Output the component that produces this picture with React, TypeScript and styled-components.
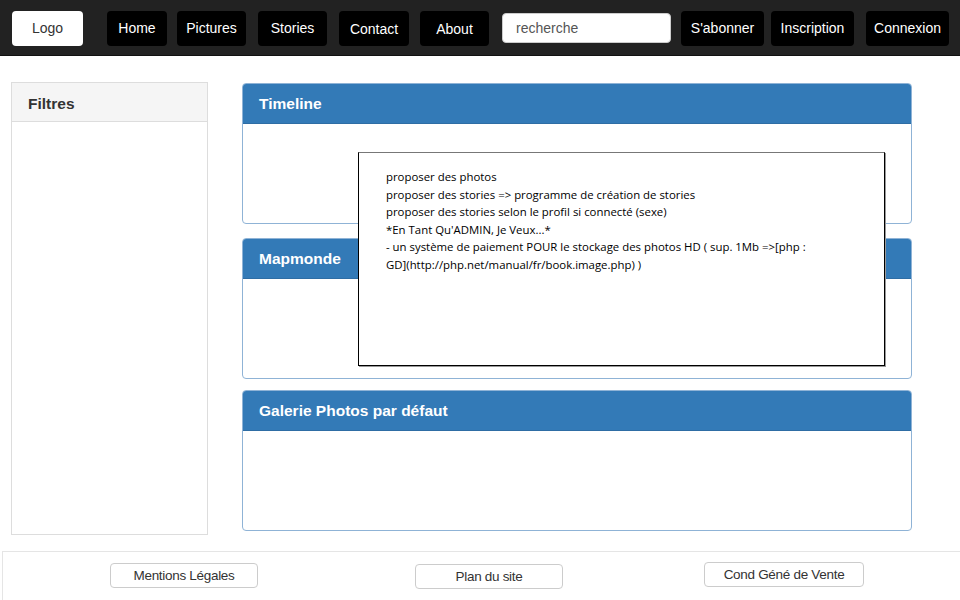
import React from "react";
import styled, { createGlobalStyle } from "styled-components";

const Global = createGlobalStyle`
  html, body { margin: 0; padding: 0; background: #fff; }
  body { font-family: "Liberation Sans", Arial, sans-serif; width: 960px; height: 600px; overflow: hidden; }
  * { box-sizing: border-box; }
`;

const Page = styled.div`
  position: relative;
  width: 960px;
  height: 600px;
  display: flex;
  flex-direction: column;
`;

const TopBar = styled.header`
  height: 56px;
  background: #222;
  display: flex;
  align-items: center;
  padding-left: 12px;
  border-bottom: 1px solid #111;
`;

const LogoButton = styled.div`
  width: 71px;
  height: 35px;
  background: #fff;
  border-radius: 4px;
  display: flex;
  align-items: center;
  justify-content: center;
  font-size: 14px;
  color: #333;
  margin-right: 24px;
  margin-top: 1px;
`;

const NavButton = styled.div<{ $w: number; $ml?: number; $dy?: number }>`
  width: ${(p) => p.$w}px;
  height: 35px;
  margin-left: ${(p) => p.$ml ?? 0}px;
  margin-top: ${(p) => (p.$dy ?? 0) * 2 + 1}px;
  background: #000;
  border-radius: 4px;
  color: #fff;
  font-size: 14px;
  display: flex;
  align-items: center;
  justify-content: center;
`;

const Search = styled.div`
  width: 169px;
  height: 30px;
  margin-left: 13px;
  margin-top: 1px;
  background: #fff;
  border: 1px solid #ccc;
  border-radius: 4px;
  display: flex;
  align-items: center;
  padding-left: 13px;
  font-size: 14px;
  color: #555;
`;

const Body = styled.main`
  flex: 1;
  display: flex;
  padding: 26px 0 0 11px;
  gap: 34px;
`;

const Sidebar = styled.aside`
  width: 197px;
  height: 453px;
  border: 1px solid #ddd;
  display: flex;
  flex-direction: column;
`;

const SideHeader = styled.div`
  height: 39px;
  background: #f5f5f5;
  border-bottom: 1px solid #ddd;
  display: flex;
  align-items: center;
  padding: 3px 0 0 16px;
  font-size: 15.5px;
  font-weight: bold;
  color: #333;
`;

const MainCol = styled.div`
  width: 670px;
  display: flex;
  flex-direction: column;
  padding-top: 1px;
`;

const Panel = styled.section<{ $h: number; $mb: number }>`
  height: ${(p) => p.$h}px;
  margin-bottom: ${(p) => p.$mb}px;
  border: 1px solid #8fb3d6;
  border-radius: 4px;
  overflow: hidden;
`;

const PanelHeader = styled.div`
  height: 40px;
  background: #337ab7;
  border-bottom: 1px solid #2e6da4;
  display: flex;
  align-items: center;
  padding: 1px 0 0 16px;
  color: #fff;
  font-size: 15.5px;
  font-weight: bold;
`;

const Note = styled.div`
  position: absolute;
  left: 358px;
  top: 152px;
  width: 527px;
  height: 214px;
  background: #fff;
  border: 1px solid #000;
  border-top-color: #777;
  box-shadow: 1px 1px 0 #999;
  padding: 15px 0 0 27px;
  font-family: "Open Sans", "DejaVu Sans", sans-serif;
  font-size: 11.4px;
  line-height: 17.6px;
  color: #000;
`;

const NoteLine = styled.div`
  white-space: nowrap;
`;

const Footer = styled.footer`
  height: 49px;
  margin-left: 2px;
  border-top: 1px solid #e5e5e5;
  border-left: 1px solid #e5e5e5;
  display: flex;
  align-items: flex-start;
  padding: 10px 0 0 107px;
`;

const FooterButton = styled.div<{ $w: number; $ml?: number; $dy?: number }>`
  width: ${(p) => p.$w}px;
  height: 25px;
  margin-left: ${(p) => p.$ml ?? 0}px;
  margin-top: ${(p) => p.$dy ?? 0}px;
  border: 1px solid #ccc;
  border-radius: 4px;
  background: #fff;
  display: flex;
  align-items: center;
  justify-content: center;
  font-size: 13.5px;
  color: #333;
  letter-spacing: -0.3px;
`;

const navItems = [
  { label: "Home", w: 60, ml: 0 },
  { label: "Pictures", w: 69, ml: 10 },
  { label: "Stories", w: 69, ml: 12 },
  { label: "Contact", w: 70, ml: 12, dy: 0.5 },
  { label: "About", w: 69, ml: 11, dy: 0.5 },
];

const rightItems = [
  { label: "S'abonner", w: 83, ml: 10 },
  { label: "Inscription", w: 83, ml: 7 },
  { label: "Connexion", w: 83, ml: 12 },
];

const noteLines = [
  "proposer des photos",
  "proposer des stories => programme de création de stories",
  "proposer des stories selon le profil si connecté (sexe)",
  "*En Tant Qu'ADMIN, Je Veux...*",
  "- un système de paiement POUR le stockage des photos HD ( sup. 1Mb =>[php :",
  "GD](http://php.net/manual/fr/book.image.php) )",
];

export default function App() {
  return (
    <Page>
      <Global />
      <TopBar>
        <LogoButton>Logo</LogoButton>
        {navItems.map((n) => (
          <NavButton key={n.label} $w={n.w} $ml={n.ml} $dy={n.dy}>
            {n.label}
          </NavButton>
        ))}
        <Search>recherche</Search>
        {rightItems.map((n) => (
          <NavButton key={n.label} $w={n.w} $ml={n.ml}>
            {n.label}
          </NavButton>
        ))}
      </TopBar>
      <Body>
        <Sidebar>
          <SideHeader>Filtres</SideHeader>
        </Sidebar>
        <MainCol>
          <Panel $h={141} $mb={14}>
            <PanelHeader>Timeline</PanelHeader>
          </Panel>
          <Panel $h={141} $mb={11}>
            <PanelHeader>Mapmonde</PanelHeader>
          </Panel>
          <Panel $h={141} $mb={0}>
            <PanelHeader>Galerie Photos par défaut</PanelHeader>
          </Panel>
        </MainCol>
      </Body>
      <Footer>
        <FooterButton $w={148} $dy={1}>Mentions Légales</FooterButton>
        <FooterButton $w={148} $ml={157} $dy={2}>Plan du site</FooterButton>
        <FooterButton $w={160} $ml={141}>Cond Géné de Vente</FooterButton>
      </Footer>
      <Note>
        {noteLines.map((l, i) => (
          <NoteLine key={i}>{l}</NoteLine>
        ))}
      </Note>
    </Page>
  );
}
